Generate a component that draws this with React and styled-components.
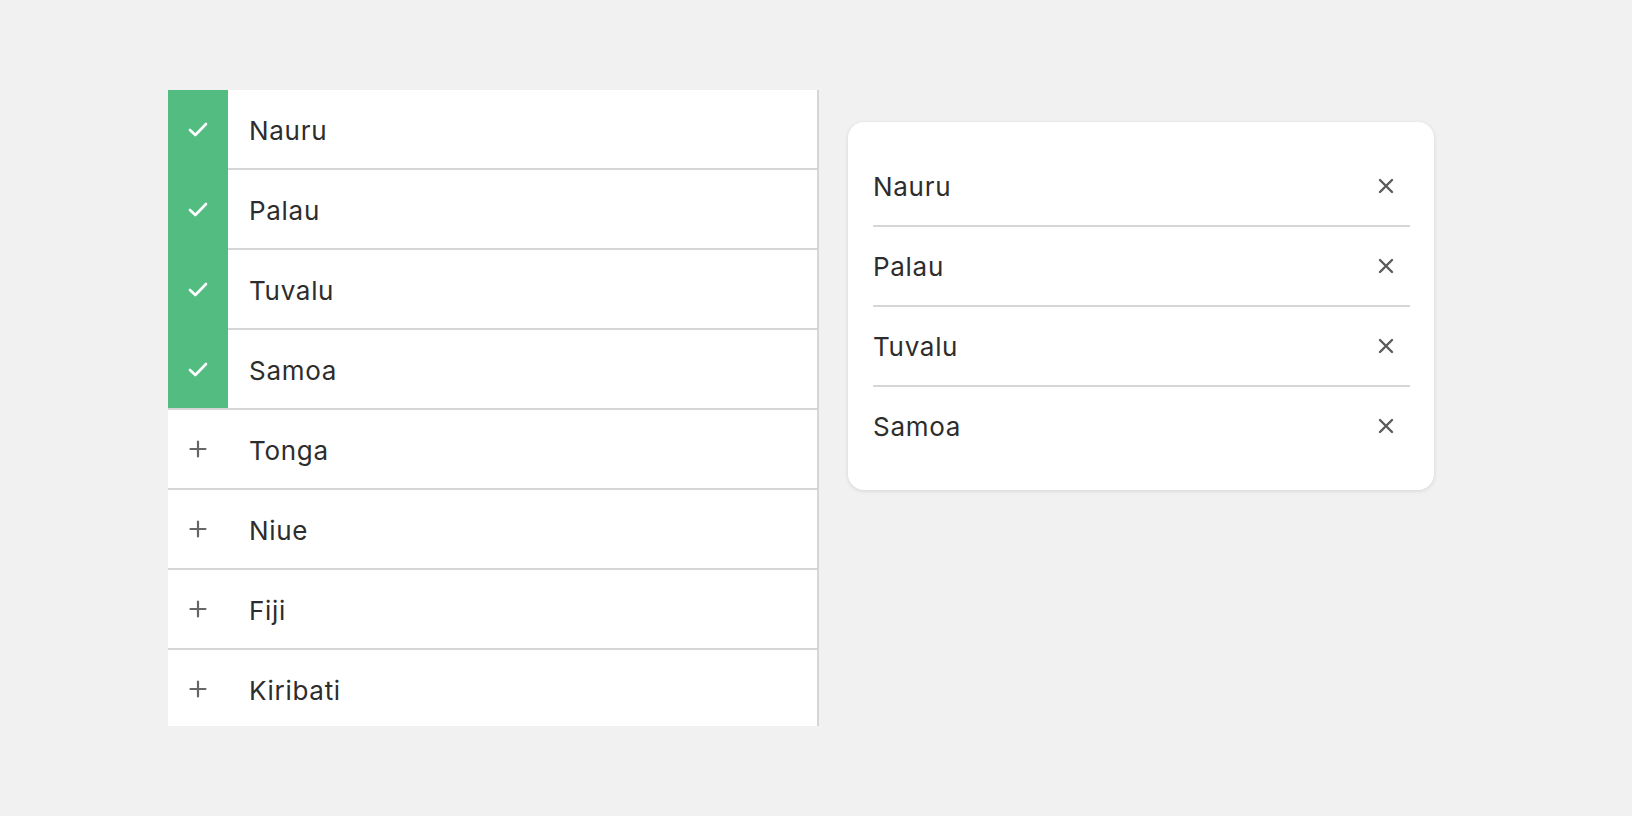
import React from 'react';
import styled, { createGlobalStyle } from 'styled-components';

const GlobalStyle = createGlobalStyle`
  html, body {
    margin: 0;
    padding: 0;
    background: #f1f1f1;
    font-family: Inter, "Noto Sans", sans-serif;
  }
`;

const Page = styled.div`
  display: flex;
  align-items: flex-start;
  gap: 29px;
  padding: 90px 0 0 168px;
  width: 1632px;
  height: 816px;
  box-sizing: border-box;
`;

const List = styled.div`
  width: 651px;
  height: 636px;
  overflow: hidden;
  background: #fff;
  border-right: 2px solid #d6d6d6;
  box-sizing: border-box;
`;

const Row = styled.div`
  display: flex;
  align-items: stretch;
  height: 78px;
  border-top: ${(p) => (p.first ? 'none' : '2px solid #d6d6d6')};
`;

const Mark = styled.div`
  width: 60px;
  flex-shrink: 0;
  display: flex;
  align-items: center;
  justify-content: center;
  background: ${(p) => (p.checked ? '#53bc80' : 'transparent')};
  margin-top: ${(p) => (p.checked && !p.first ? '-2px' : '0')};
  padding-top: ${(p) => (p.checked && !p.first ? '2px' : '0')};
`;

const Label = styled.span`
  display: flex;
  align-items: center;
  padding: 2px 0 0 21px;
  font-size: 26px;
  color: #2d2d2d;
  letter-spacing: 0.7px;
`;

const Card = styled.div`
  margin-top: 32px;
  width: 586px;
  padding: 25px 24px 25px 25px;
  box-sizing: border-box;
  background: #fff;
  border-radius: 16px;
  box-shadow: 0 1px 4px rgba(0, 0, 0, 0.12);
`;

const CardRow = styled.div`
  display: flex;
  align-items: center;
  justify-content: space-between;
  height: 78px;
  border-top: ${(p) => (p.first ? 'none' : '2px solid #d6d6d6')};
  font-size: 26px;
  color: #2d2d2d;
  letter-spacing: 0.7px;
`;

const Remove = styled.button`
  width: 48px;
  height: 48px;
  border: none;
  background: none;
  padding: 0;
  display: flex;
  align-items: center;
  justify-content: center;
  cursor: pointer;
`;

const CheckIcon = () => (
  <svg width="20" height="15" viewBox="0 0 20 15" fill="none">
    <path d="M2 8 L7.3 13 L18 2" stroke="#fff" strokeWidth="2.6" strokeLinecap="round" strokeLinejoin="round" />
  </svg>
);

const PlusIcon = () => (
  <svg width="18" height="18" viewBox="0 0 18 18" fill="none">
    <path d="M9 1.5 V16.5 M1.5 9 H16.5" stroke="#666" strokeWidth="2.2" strokeLinecap="round" />
  </svg>
);

const CloseIcon = () => (
  <svg width="16" height="16" viewBox="0 0 16 16" fill="none">
    <path d="M2 2 L14 14 M14 2 L2 14" stroke="#5a5a5a" strokeWidth="2.4" strokeLinecap="round" />
  </svg>
);

const countries = [
  { name: 'Nauru', checked: true },
  { name: 'Palau', checked: true },
  { name: 'Tuvalu', checked: true },
  { name: 'Samoa', checked: true },
  { name: 'Tonga', checked: false },
  { name: 'Niue', checked: false },
  { name: 'Fiji', checked: false },
  { name: 'Kiribati', checked: false },
];

export default function App() {
  const selected = countries.filter((c) => c.checked);
  return (
    <>
      <GlobalStyle />
      <Page>
        <List>
          {countries.map((c, i) => (
            <Row key={c.name} first={i === 0}>
              <Mark checked={c.checked} first={i === 0}>
                {c.checked ? <CheckIcon /> : <PlusIcon />}
              </Mark>
              <Label>{c.name}</Label>
            </Row>
          ))}
        </List>
        <Card>
          {selected.map((c, i) => (
            <CardRow key={c.name} first={i === 0}>
              <span>{c.name}</span>
              <Remove aria-label={`Remove ${c.name}`}>
                <CloseIcon />
              </Remove>
            </CardRow>
          ))}
        </Card>
      </Page>
    </>
  );
}
